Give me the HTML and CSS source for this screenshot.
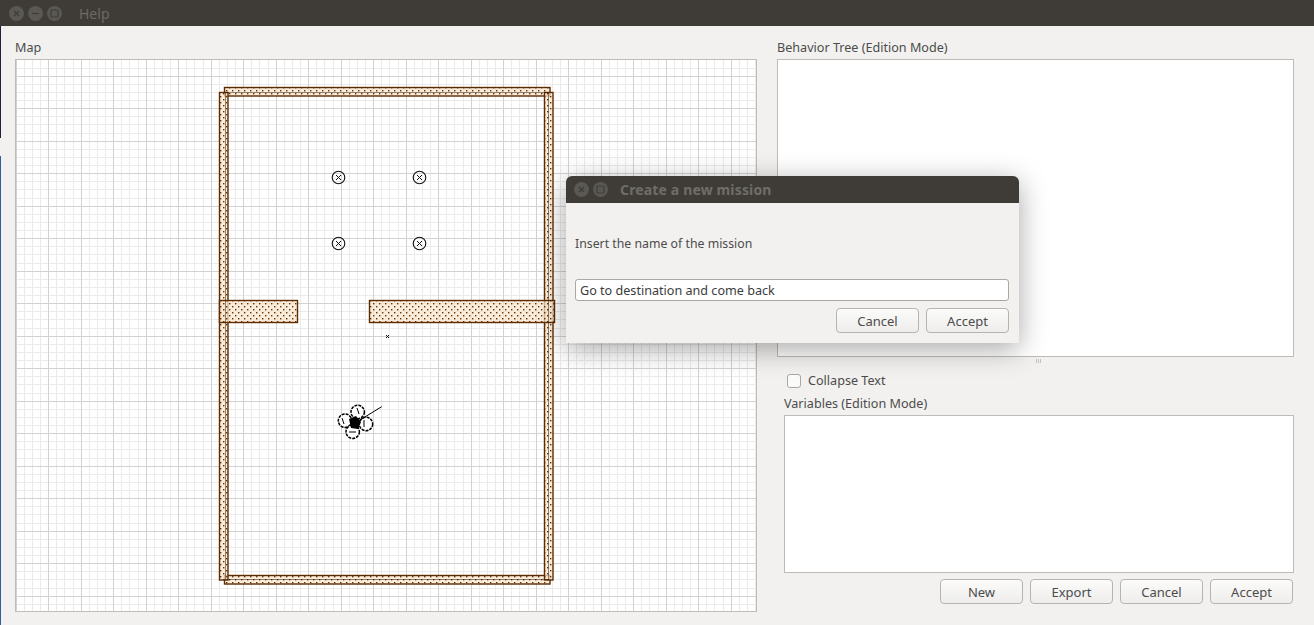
FILE: index.html
```html
<!DOCTYPE html>
<html lang="en">
<head>
  <meta charset="UTF-8" />
  <title>Help</title>
  <link rel="stylesheet" href="styles.css">
</head>
<body>
  <div class="desktop-edge"></div>
  <div class="window">
    <header class="titlebar">
      <div class="controls">
        <span class="ctl"><svg viewBox="0 0 15 15"><path d="M5 5l5 5M10 5l-5 5"/></svg></span>
        <span class="ctl"><svg viewBox="0 0 15 15"><path d="M4 7.5h7"/></svg></span>
        <span class="ctl"><svg viewBox="0 0 15 15"><rect x="4" y="4" width="7" height="7" rx="1"/></svg></span>
      </div>
      <span class="menu-title">Help</span>
    </header>

    <main class="content">
      <section class="map-col">
        <label class="field-label">Map</label>
        <div class="map">
          <svg class="map-svg" width="740" height="551" viewBox="0 0 740 551">
            <defs>
              <pattern id="grid" x="0" y="16" width="65" height="65" patternUnits="userSpaceOnUse">
                <path class="grid-minor" d="M8.5 0V65M16.5 0V65M24.5 0V65M40.5 0V65M48.5 0V65M57.5 0V65M0 8.5H65M0 16.5H65M0 24.5H65M0 40.5H65M0 48.5H65M0 57.5H65"/>
                <path class="grid-major" d="M0.5 0V65M32.5 0V65M0 0.5H65M0 32.5H65"/>
              </pattern>
              <pattern id="dots" x="0" y="0" width="6" height="6" patternUnits="userSpaceOnUse">
                <rect width="6" height="6" fill="#f8e6d0" fill-opacity="0.75"/>
                <rect width="1.4" height="1.4" fill="#6b3200"/>
                <rect x="3" y="3" width="1.4" height="1.4" fill="#6b3200"/>
              </pattern>
            </defs>
            <rect width="740" height="551" fill="url(#grid)"/>

            <g class="walls">
              <rect x="208.5" y="27.5" width="325.5" height="8.5"/>
              <rect x="208.5" y="515.5" width="325.5" height="8.5"/>
              <rect x="203.5" y="32.5" width="8.5" height="487.5"/>
              <rect x="528.5" y="32.5" width="8.5" height="487.5"/>
              <rect x="203.5" y="240.5" width="78" height="22"/>
              <rect x="353.5" y="240.5" width="185" height="22"/>
            </g>
            <rect class="seam" x="209.5" y="32.5" width="323" height="487"/>

            <g class="target" transform="translate(322.5 117.5)"><circle r="6.3"/><path d="M-2.5-2.5l5 5M2.5-2.5l-5 5"/></g>
            <g class="target" transform="translate(403.5 117.5)"><circle r="6.3"/><path d="M-2.5-2.5l5 5M2.5-2.5l-5 5"/></g>
            <g class="target" transform="translate(322.5 183.5)"><circle r="6.3"/><path d="M-2.5-2.5l5 5M2.5-2.5l-5 5"/></g>
            <g class="target" transform="translate(403.5 183.5)"><circle r="6.3"/><path d="M-2.5-2.5l5 5M2.5-2.5l-5 5"/></g>

            <path class="mark" d="M370 275l3 3M373 275l-3 3"/>

            <g class="drone">
              <circle class="rotor" cx="341.7" cy="352" r="6.7"/>
              <circle class="rotor" cx="329" cy="360.7" r="6.7"/>
              <circle class="rotor" cx="350" cy="364" r="6.7"/>
              <circle class="rotor" cx="336.7" cy="371.7" r="6.7"/>
              <path class="blade" d="M341 348l2 6M326 358l2 6M348 360v7M333 372h7"/>
              <path class="heading" d="M339 363L365.7 346.7"/>
              <path class="body" d="M333 359l7-3 5 6-3 7-7-1z"/>
            </g>
          </svg>
        </div>
      </section>

      <section class="side-col">
        <div class="tree-block">
          <label class="field-label">Behavior Tree (Edition Mode)</label>
          <div class="text-area tree-area"></div>
        </div>
        <div class="splitter"><i></i><i></i><i></i></div>
        <div class="vars-block">
          <div class="check-row">
            <span class="checkbox"></span>
            <span class="check-label">Collapse Text</span>
          </div>
          <label class="field-label">Variables (Edition Mode)</label>
          <div class="text-area vars-area"></div>
          <div class="button-row">
            <button class="btn">New</button>
            <button class="btn">Export</button>
            <button class="btn">Cancel</button>
            <button class="btn">Accept</button>
          </div>
        </div>
      </section>
    </main>
  </div>

  <div class="dialog">
    <header class="dialog-titlebar">
      <div class="controls">
        <span class="ctl"><svg viewBox="0 0 15 15"><path d="M5 5l5 5M10 5l-5 5"/></svg></span>
        <span class="ctl"><svg viewBox="0 0 15 15"><rect x="4" y="4" width="7" height="7" rx="1"/></svg></span>
      </div>
      <span class="dialog-title">Create a new mission</span>
    </header>
    <div class="dialog-body">
      <p class="dialog-text">Insert the name of the mission</p>
      <div class="name-input">Go to destination and come back</div>
      <div class="dialog-buttons">
        <button class="btn">Cancel</button>
        <button class="btn">Accept</button>
      </div>
    </div>
  </div>
</body>
</html>
```

FILE: styles.css
```css
* {
  box-sizing: border-box;
}
html, body {
  height: 100%;
}
body {
  margin: 0;
  font-family: 'Noto Sans', sans-serif;
  font-size: 12.6px;
  color: #4c4c4c;
  background: #f2f1ef;
  overflow: hidden;
  position: relative;
}
.desktop-edge {
  position: absolute;
  left: 0;
  top: 26px;
  width: 1px;
  height: 599px;
  background: linear-gradient(#2a1a3c 0 112px, #f2f1ef 112px 130px, #2f5f9f 130px 599px);
}
.titlebar {
  height: 26px;
  background: #3f3c37;
  display: flex;
  align-items: center;
  padding-left: 9px;
}
.controls {
  display: flex;
  gap: 4px;
}
.ctl {
  width: 15px;
  height: 15px;
  border-radius: 50%;
  background: #5a5852;
  display: block;
}
.ctl svg {
  display: block;
  width: 15px;
  height: 15px;
  fill: none;
  stroke: #3f3c37;
  stroke-width: 1.2;
}
.menu-title {
  margin-left: 17px;
  font-size: 14px;
  color: #6b6a66;
}

.content {
  display: flex;
  padding: 14px 20px 0 15px;
  gap: 20px;
}
.map-col {
  width: 742px;
}
.field-label {
  display: block;
  height: 19px;
  line-height: 15px;
}
.map {
  width: 742px;
  height: 553px;
  border: 1px solid #bdbcb8;
  background: #fff;
}
.map-svg {
  display: block;
}
.grid-minor, .grid-major {
  fill: none;
  stroke-width: 1;
  shape-rendering: crispEdges;
}
.grid-minor {
  stroke: #ebebeb;
}
.grid-major {
  stroke: #d2d2d2;
}
.walls rect {
  fill: url(#dots);
  stroke: #5e2c00;
  stroke-width: 1.4;
}
.seam {
  fill: none;
  stroke: #2a1500;
  stroke-width: 1;
  stroke-dasharray: 1 1;
}
.target circle {
  fill: none;
  stroke: #111;
  stroke-width: 1.1;
}
.target path, .mark {
  fill: none;
  stroke: #111;
  stroke-width: 1;
}
.heading, .blade {
  fill: none;
  stroke: #000;
  stroke-width: 1;
}
.rotor {
  fill: #fff;
  stroke: #000;
  stroke-width: 1.5;
  stroke-dasharray: 3 1;
}
.body {
  fill: #000;
}

.side-col {
  width: 517px;
}
.text-area {
  background: #fff;
  border: 1px solid #bdbcb8;
}
.tree-area {
  height: 298px;
}
.splitter {
  height: 9px;
  display: flex;
  justify-content: center;
  gap: 1px;
  padding: 2px 0 0 6px;
}
.splitter i {
  width: 1px;
  height: 4px;
  background: #c4c3bf;
}
.vars-block {
  padding-left: 7px;
}
.check-row {
  display: flex;
  align-items: center;
  height: 29px;
  padding-left: 3px;
  gap: 7px;
}
.checkbox {
  width: 14px;
  height: 14px;
  border: 1px solid #a9a8a4;
  border-radius: 3px;
  background: #fbfbfa;
}
.check-label {
  line-height: 16px;
}
.vars-block .field-label {
  height: 20px;
  padding-top: 1px;
}
.vars-area {
  height: 158px;
}
.button-row {
  display: flex;
  justify-content: flex-end;
  gap: 7px;
  padding: 6px 1px 0 0;
}
.btn {
  width: 83px;
  height: 25px;
  padding: 0;
  font-family: inherit;
  font-size: 13px;
  color: #4c4c4c;
  border: 1px solid #b5b4b0;
  border-radius: 4px;
  background: linear-gradient(#fbfbfa, #eeedeb);
}

.dialog {
  position: absolute;
  left: 566px;
  top: 176px;
  width: 453px;
  height: 167px;
  background: #f2f1ef;
  border-radius: 6px 6px 0 0;
  box-shadow: 0 6px 28px rgba(0, 0, 0, 0.35);
}
.dialog-titlebar {
  height: 27px;
  background: #3f3c37;
  border-radius: 6px 6px 0 0;
  display: flex;
  align-items: center;
  padding-left: 8px;
}
.dialog-title {
  margin-left: 12px;
  font-size: 14px;
  letter-spacing: 0.15px;
  font-weight: 700;
  color: #6e6d69;
}
.dialog-body {
  padding: 0 10px 0 9px;
}
.dialog-text {
  margin: 0;
  padding-top: 33px;
  height: 76px;
  line-height: 16px;
  font-size: 12.3px;
}
.name-input {
  height: 22px;
  line-height: 21px;
  padding-left: 4px;
  background: #fff;
  border: 1px solid #a9a8a4;
  border-radius: 3px;
  color: #3c3c3c;
}
.dialog-buttons {
  display: flex;
  justify-content: flex-end;
  gap: 7px;
  margin-top: 7px;
}
```
